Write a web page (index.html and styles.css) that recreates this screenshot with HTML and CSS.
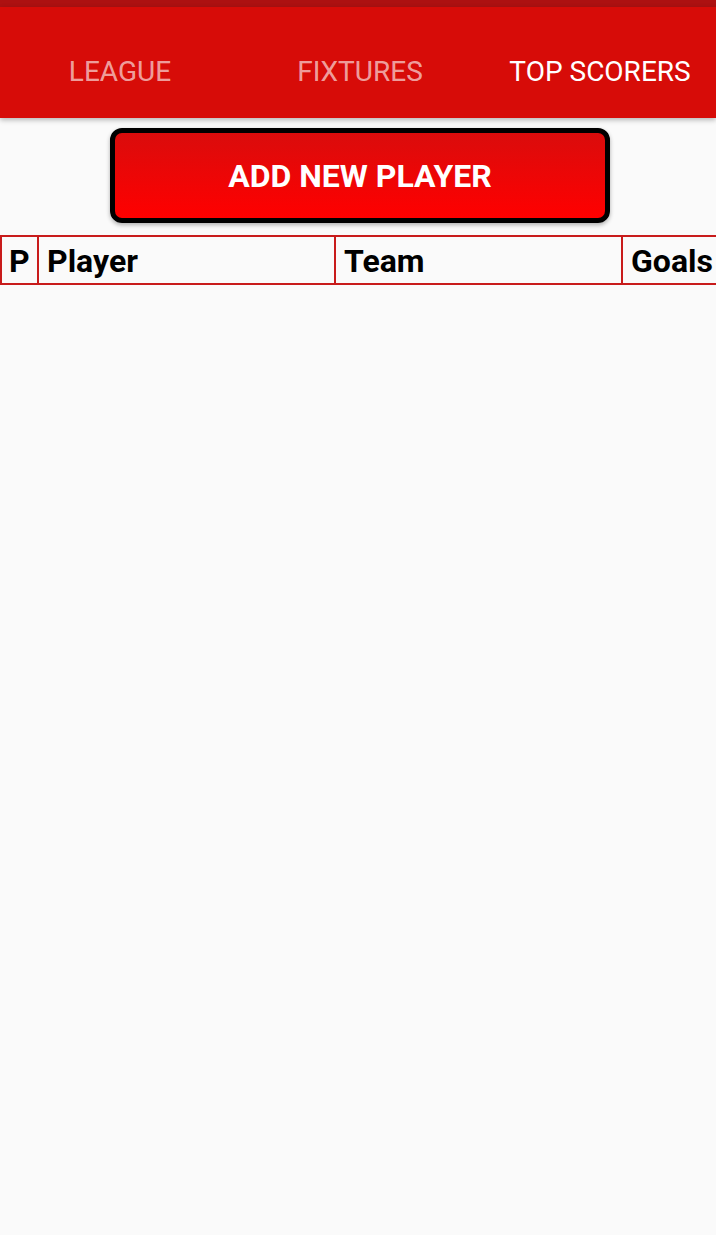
FILE: index.html
```html
<!DOCTYPE html>
<html>
<head>
<meta charset="utf-8">
<link rel="stylesheet" href="styles.css">
</head>
<body>
<div class="status"></div>
<nav class="tabs">
  <div class="tab">LEAGUE</div>
  <div class="tab">FIXTURES</div>
  <div class="tab active">TOP SCORERS</div>
</nav>
<main class="content">
  <div class="btn-wrap">
    <button class="add-btn">ADD NEW PLAYER</button>
  </div>
  <div class="table-wrap">
    <div class="table">
      <div class="cell c-p">P</div>
      <div class="cell c-player">Player</div>
      <div class="cell c-team">Team</div>
      <div class="cell c-goals">Goals</div>
    </div>
  </div>
</main>
</body>
</html>
```
FILE: styles.css
```css
html, body {
  margin: 0;
  padding: 0;
  background: #fafafa;
  overflow: hidden;
}
body {
  width: 716px;
  height: 1235px;
  font-family: Roboto, "Liberation Sans", sans-serif;
}
.status {
  height: 7px;
  background: #ad1111;
}
.tabs {
  display: grid;
  grid-template-columns: 240px 240px 236px;
  background: #d70c08;
  padding: 49px 0 30px;
  box-shadow: 0 2px 5px rgba(0,0,0,0.28);
  position: relative;
  z-index: 1;
}
.tab {
  text-align: center;
  font-size: 28px;
  line-height: 32px;
  color: rgba(255,255,255,0.62);
  font-weight: 400;
  white-space: nowrap;
}
.tab.active {
  color: #ffffff;
  padding-left: 4px;
}
.content {
  padding-top: 10px;
  overflow: hidden;
}
.btn-wrap {
  display: flex;
  justify-content: center;
  padding-left: 4px;
}
.add-btn {
  width: 500px;
  height: 95px;
  border: 5px solid #000;
  border-radius: 12px;
  background: linear-gradient(to bottom, #da0c0c, #ff0000);
  color: #fff;
  font-family: Roboto, "Liberation Sans", sans-serif;
  font-weight: 700;
  font-size: 32px;
  box-shadow: 0 2px 4px rgba(0,0,0,0.3);
  padding: 0;
}
.table-wrap {
  margin-top: 12px;
  width: 716px;
  overflow: hidden;
}
.table {
  display: flex;
  width: 760px;
}
.cell {
  flex: none;
  box-sizing: border-box;
  height: 50px;
  border: 2px solid #c81b1b;
  margin-left: -2px;
  font-weight: 700;
  font-size: 32px;
  color: #000;
  display: flex;
  align-items: center;
  padding: 2px 8px 0 8px;
  white-space: nowrap;
}
.c-p { width: 39px; margin-left: 0; padding-left: 7px; }
.c-player { width: 299px; }
.c-team { width: 289px; }
.c-goals { width: 140px; }
```
